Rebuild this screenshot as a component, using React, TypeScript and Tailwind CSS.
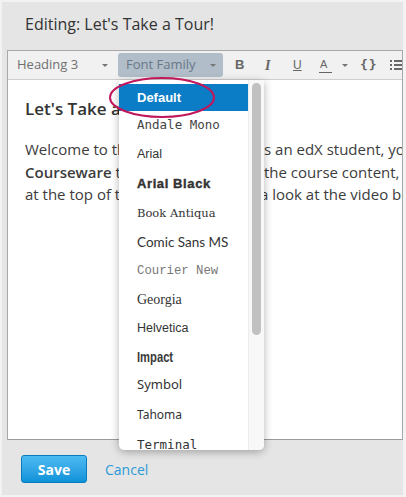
import React from "react";

const items: { label: string; h: number; cls: string; inner?: string }[] = [
  { label: "Andale Mono", h: 28, cls: "font-['DejaVu_Sans_Mono',monospace] text-[12.5px] text-[#444]" },
  { label: "Arial", h: 30, cls: "font-['Liberation_Sans',sans-serif] text-[12.5px]" },
  { label: "Arial Black", h: 30, cls: "font-['Liberation_Sans',sans-serif] text-[13px] font-bold tracking-[0.6px] [-webkit-text-stroke:0.4px_#333]" },
  { label: "Book Antiqua", h: 29, cls: "font-['DejaVu_Serif',serif] text-[11.5px]" },
  { label: "Comic Sans MS", h: 29, cls: "font-['Comic_Sans_MS','Lato',sans-serif] text-[13.5px]" },
  { label: "Courier New", h: 28, cls: "font-['Liberation_Mono',monospace] text-[12.3px] text-[#777]" },
  { label: "Georgia", h: 29, cls: "font-['Liberation_Serif',serif] text-[14px]" },
  { label: "Helvetica", h: 29, cls: "font-['Liberation_Sans',sans-serif] text-[12.5px]" },
  { label: "Impact", h: 28, cls: "font-['Liberation_Sans',sans-serif] font-black text-[14px] text-[#3a3a3a]", inner: "inline-block origin-left scale-x-[0.8]" },
  { label: "Symbol", h: 28, cls: "font-['Noto_Sans',sans-serif] text-[13px]" },
  { label: "Tahoma", h: 32, cls: "font-['Noto_Sans',sans-serif] text-[12px]" },
  { label: "Terminal", h: 28, cls: "font-['DejaVu_Sans_Mono',monospace] text-[12.5px]" },
];

function Caret() {
  return <span className="inline-block w-0 h-0 border-l-[3px] border-r-[3px] border-t-[3px] border-l-transparent border-r-transparent border-t-[#777]" />;
}

export default function App() {
  return (
    <div className="relative w-[406px] h-[497px] bg-[#f3f3f3] overflow-hidden font-['Open_Sans',sans-serif]">
      <div className="ml-[2px] mt-[2px] w-[401px] h-[493px] bg-[#e5e5e5] flex flex-col">
        <div className="h-[48px] pl-[23px] pt-[10px] text-[16px] leading-[24px] text-[#333]">
          Editing: Let's Take a Tour!
        </div>
        <div className="ml-[5px] w-[396px] border border-[#a9a9a9] border-b-[#9a9a9a] bg-white flex flex-col">
          {/* toolbar */}
          <div className="h-[29px] bg-[#f1f1f1] border-b border-[#cfcfcf] flex items-center text-[13px] text-[#707070] whitespace-nowrap">
            <div className="w-[112px] pl-[9px] pr-[10px] flex items-center justify-between">
              <span>Heading 3</span>
              <Caret />
            </div>
            <div className="w-[107px] h-[24px] rounded-[3px] bg-[#b1bdc8] text-[#66788a] pl-[8px] pr-[7px] flex items-center justify-between">
              <span>Font Family</span>
              <Caret />
            </div>
            <div className="flex items-center text-[#666] ml-[12px]">
              <span className="w-[29px] font-bold text-[13px] font-['Liberation_Sans',sans-serif]">B</span>
              <span className="w-[29px] italic text-[14px] font-['Liberation_Serif',serif] font-bold pl-[1px]">I</span>
              <span className="w-[26px] underline text-[12px] font-['Liberation_Sans',sans-serif]">U</span>
              <span className="w-[23px] flex flex-col items-start">
                <span className="text-[11px] leading-[12px] font-['Liberation_Sans',sans-serif] pl-[1px]">A</span>
                <span className="block w-[13px] h-[1px] bg-[#666] mt-[2px]" />
              </span>
              <span className="w-[18px] flex items-center"><Caret /></span>
              <span className="w-[30px] font-bold text-[13px] font-['DejaVu_Sans_Mono',monospace] tracking-[1px]">{"{}"}</span>
              <span className="flex flex-col gap-[2px]">
                {[0, 1, 2].map((i) => (
                  <span key={i} className="flex items-center gap-[2px]">
                    <span className="w-[2px] h-[2px] bg-[#666]" />
                    <span className="w-[8px] h-[2px] bg-[#666]" />
                  </span>
                ))}
              </span>
            </div>
          </div>
          {/* content */}
          <div className="h-[359px] pl-[17px] pt-[17px] text-[#3c3c3c] whitespace-nowrap overflow-hidden">
            <div className="text-[17px] font-semibold leading-[24px] text-[#333]">Let's Take a Tour!</div>
            <div className="mt-[17px] text-[15px] leading-[22.5px]">
              <div>
                <span className="inline-block w-[239px] overflow-hidden align-top">Welcome to the course! A</span>s an edX student, you will
              </div>
              <div>
                <span className="inline-block w-[239px] overflow-hidden align-top">
                  <b className="font-semibold">Courseware</b> tab, which holds
                </span>
                the course content, but
              </div>
              <div>
                <span className="inline-block w-[235px] overflow-hidden align-top">at the top of the page. Take</span>a look at the video below
              </div>
            </div>
          </div>
        </div>
        <div className="flex items-center pl-[19px] pt-[15px] gap-[18px]">
          <button className="w-[66px] h-[28px] rounded-[3px] border border-[#0a7cbd] bg-gradient-to-b from-[#4cbbf2] to-[#0b92d9] text-white text-[14px] font-bold font-['Open_Sans',sans-serif]">
            Save
          </button>
          <span className="text-[14px] text-[#2a9ad8]">Cancel</span>
        </div>
      </div>

      {/* dropdown */}
      <div className="absolute left-[119px] top-[80px] w-[145px] h-[370px] bg-white rounded-b-[5px] shadow-[0_2px_8px_rgba(0,0,0,0.3)] overflow-hidden flex">
        <div className="w-[129px] pt-[4px] text-[#333]">
          <div className="h-[27px] bg-[#0a7dc6] text-white font-bold text-[13px] pl-[18px] flex items-center font-['Liberation_Sans',sans-serif]">
            Default
          </div>
          {items.map((it) => (
            <div key={it.label} style={{ height: it.h }} className={`pl-[18px] flex items-center whitespace-nowrap ${it.cls}`}>
              <span className={it.inner}>{it.label}</span>
            </div>
          ))}
        </div>
        <div className="flex-1 bg-[#f8f8f8] border-l border-[#ececec] pt-[3px] pl-[3px]">
          <div className="w-[9px] h-[252px] rounded-full bg-[#c1c1c1]" />
        </div>
      </div>

      {/* annotation ellipse */}
      <svg className="absolute left-0 top-0 pointer-events-none" width="406" height="497">
        <ellipse cx="162" cy="97.5" rx="52" ry="19.5" fill="none" stroke="#c0175d" strokeWidth="2" />
      </svg>
    </div>
  );
}
